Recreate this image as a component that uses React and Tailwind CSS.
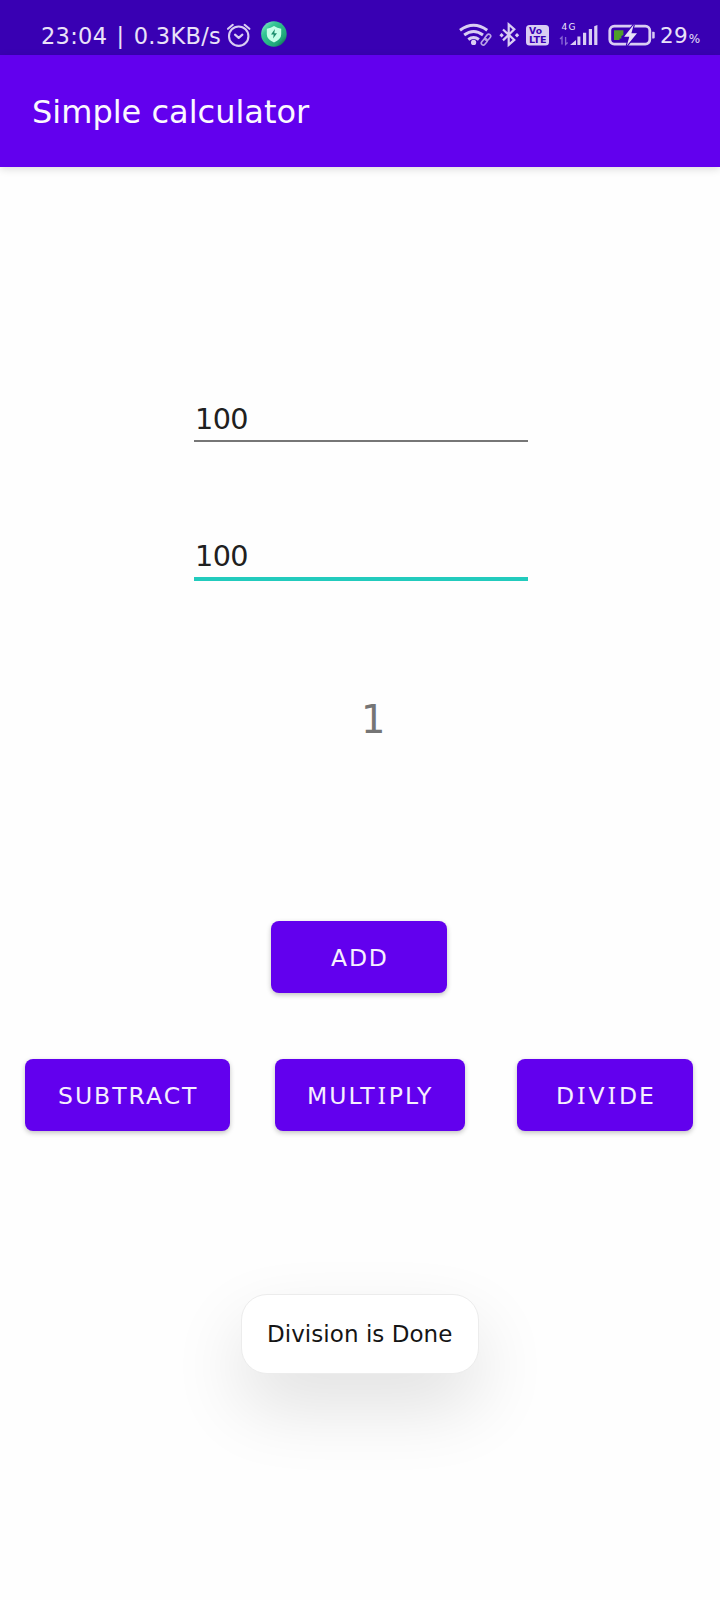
const SANS = "font-['DejaVu_Sans',sans-serif]";

function AlarmIcon() {
  return (
    <svg className="ml-[6px] mt-[22px] h-[26px] w-[26px] shrink-0" viewBox="226 22 26 26" fill="none" stroke="#d9cdf3" strokeWidth="2.1" strokeLinecap="round" strokeLinejoin="round">
      <circle cx="238.7" cy="36.2" r="9.7" />
      <path d="M235 34.6l3.7 3.3 3.7-3.3M228 28.8l4.8-4M249.4 28.8l-4.8-4" />
    </svg>
  );
}

function ShieldIcon() {
  return (
    <svg className="ml-[8px] mt-[20px] h-[28px] w-[28px] shrink-0" viewBox="260 20 28 28">
      <defs>
        <linearGradient id="ball" x1="0" y1="0" x2="1" y2="1">
          <stop offset="0" stopColor="#a5f5dc" />
          <stop offset=".3" stopColor="#35c795" />
          <stop offset=".75" stopColor="#1fa679" />
          <stop offset="1" stopColor="#0c3b3c" />
        </linearGradient>
      </defs>
      <circle cx="273.9" cy="34" r="12.8" fill="url(#ball)" />
      <path d="M274 26q3.2 2.3 7.2 2.7v5.6q0 5-7.2 8.2-7.2-3.2-7.2-8.2v-5.6q4-.4 7.2-2.7z" fill="#c6ffe9" />
      <path d="M274.9 29l-3.9 5.4h2.7l-.6 4.2 3.9-5.4h-2.7z" fill="#1c8d6c" />
    </svg>
  );
}

function StatusIcons() {
  return (
    <svg className="mt-[16px] h-[34px] w-[200px] shrink-0" viewBox="456 16 200 34" fill="none">
      <g stroke="#d9cdf3" strokeWidth="3">
        <path d="M460 30.2q13.6-9.8 27.2 0M464.2 35q9.4-7 18.8 0M468.3 39.5q5.3-4 10.6 0" />
      </g>
      <circle cx="473.6" cy="42.4" r="2.6" fill="#d9cdf3" />
      <g stroke="#b9a4e6" strokeWidth="1.6">
        <rect x="-4" y="-2" width="7" height="4" rx="2" transform="translate(484.6 41.5) rotate(-50)" />
        <rect x="-3" y="-2" width="7" height="4" rx="2" transform="translate(487.4 37.7) rotate(-50)" />
      </g>
      <path d="M503 29.5l11.3 10.4-5.6 5V24.4l5.6 5L503 40.4" stroke="#d9cdf3" strokeWidth="2.2" />
      <path d="M499.4 35.2l2.2-2.2 2.2 2.2-2.2 2.2zM514.8 35.2l2.2-2.2 2.2 2.2-2.2 2.2z" fill="#d9cdf3" />
      <rect x="526" y="25" width="23" height="20.5" rx="3.5" fill="#d9cdf3" />
      <g fill="#3900b3" fontFamily="DejaVu Sans" fontWeight="bold">
        <text x="529" y="34.2" fontSize="8.6" textLength="13" lengthAdjust="spacingAndGlyphs">Vo</text>
        <text x="529" y="43.4" fontSize="9.3" textLength="17.5" lengthAdjust="spacingAndGlyphs">LTE</text>
      </g>
      <text x="561.4" y="29.8" fontSize="9" fontFamily="DejaVu Sans" fill="#eee8fa" textLength="14">4G</text>
      <path d="M562 44.5V37l-2 2M565.6 37v7.5l2-2" stroke="#8b6ad6" strokeWidth="1.3" />
      <path d="M570 45l6-5V45zM577.4 36.5h3V45h-3zM583 32.8h3.2V45H583zM588.8 29h3.2v16h-3.2zM594.2 26.2l3.2-1.2v20h-3.2z" fill="#d9cdf3" />
      <rect x="609.8" y="26.1" width="40" height="18" rx="4.5" stroke="#d9cdf3" strokeWidth="2.8" />
      <path d="M614 30.2h9.4v4.8l-2 1v2.5h-1.9v1.5H614z" fill="#4f9e2c" />
      <path d="M633.8 24.6l-9.7 12.2h5.2l-2.5 9 10.2-12.6h-5.6z" fill="#e9e2f8" stroke="#3900b3" strokeWidth="2.2" className="[paint-order:stroke]" />
      <path d="M652.2 31.8h1.5q1 0 1 1v4.6q0 1-1 1h-1.5z" fill="#d9cdf3" />
    </svg>
  );
}

function Field({ value, focused }) {
  return (
    <div className="flex h-[60px] w-[334px] flex-col">
      <span className="mt-[11px] h-[46px] shrink-0 pl-[1px] text-[28.7px] leading-[51px] tracking-[-0.6px] text-[#202020]">{value}</span>
      <div className={focused ? "h-[4px] shrink-0 bg-[#22cbbd]" : "h-[2px] shrink-0 bg-[#767676]"} />
    </div>
  );
}

function Button({ className, children }) {
  return (
    <button className={`h-[72px] shrink-0 rounded-[8px] bg-[#6200ee] pt-[2px] text-left text-[23.5px] leading-[70px] whitespace-nowrap text-[#f6effe] shadow-[0_2px_5px_rgba(0,0,0,0.24)] ${className}`}>
      {children}
    </button>
  );
}

function SerifI() {
  return <span className="mx-[1px] font-['Noto_Sans',sans-serif] text-[24px] leading-none">I</span>;
}

export default function App() {
  return (
    <div className={`flex h-[1600px] w-[720px] flex-col overflow-hidden bg-[#fefefe] ${SANS}`}>
      <div className="flex h-[55px] shrink-0 items-start bg-[#3900b3] text-[#e9e2f8]">
        <span className="ml-[41px] mt-[16px] w-[179px] shrink-0 text-[22.5px] leading-[40px] tracking-[0.3px] whitespace-nowrap [word-spacing:1.8px]">23:04 | 0.3KB/s</span>
        <AlarmIcon />
        <ShieldIcon />
        <div className="w-[168px] shrink-0" />
        <StatusIcons />
        <span className="ml-[4px] mt-[16px] text-[21.5px] leading-[40px] tracking-[0.2px] whitespace-nowrap">29<span className="ml-[1px] text-[12px]">%</span></span>
      </div>
      <header className="flex h-[112px] shrink-0 items-start bg-[#6200ee] pl-[32px] shadow-[0_2px_8px_rgba(0,0,0,0.14)]">
        <h1 className="mt-[33px] text-[32px] leading-[48px] whitespace-nowrap text-[#fbf8ff]">Simple calculator</h1>
      </header>
      <main className="flex flex-col">
        <div className="mt-[216px] flex flex-col gap-[77px] pl-[194px]">
          <Field value="100" />
          <Field value="100" focused />
        </div>
        <div className="mt-[110px] h-[60px] pl-[361px] text-[38.4px] leading-[60px] text-[#757575]">1</div>
        <div className="mt-[171px] pl-[271px]">
          <Button className="w-[176px] pl-[60px] tracking-[1.8px]">ADD</Button>
        </div>
        <div className="mt-[66px] flex pl-[25px]">
          <Button className="w-[205px] pl-[33px] tracking-[2px]">SUBTRACT</Button>
          <Button className="ml-[45px] w-[190px] pl-[32px] tracking-[2px]">MULT<SerifI />PLY</Button>
          <Button className="ml-[52px] w-[176px] pl-[39px] tracking-[2.1px]">D<SerifI />V<SerifI />DE</Button>
        </div>
        <div className="mt-[163px] ml-[241px] h-[80px] w-[238px] rounded-[26px] border border-[#ececec] bg-white pl-[25px] text-[23px] leading-[79px] tracking-[0.05px] whitespace-nowrap text-[#151515] shadow-[0_32px_72px_rgba(0,0,0,0.12)]">
          Division is Done
        </div>
      </main>
    </div>
  );
}
